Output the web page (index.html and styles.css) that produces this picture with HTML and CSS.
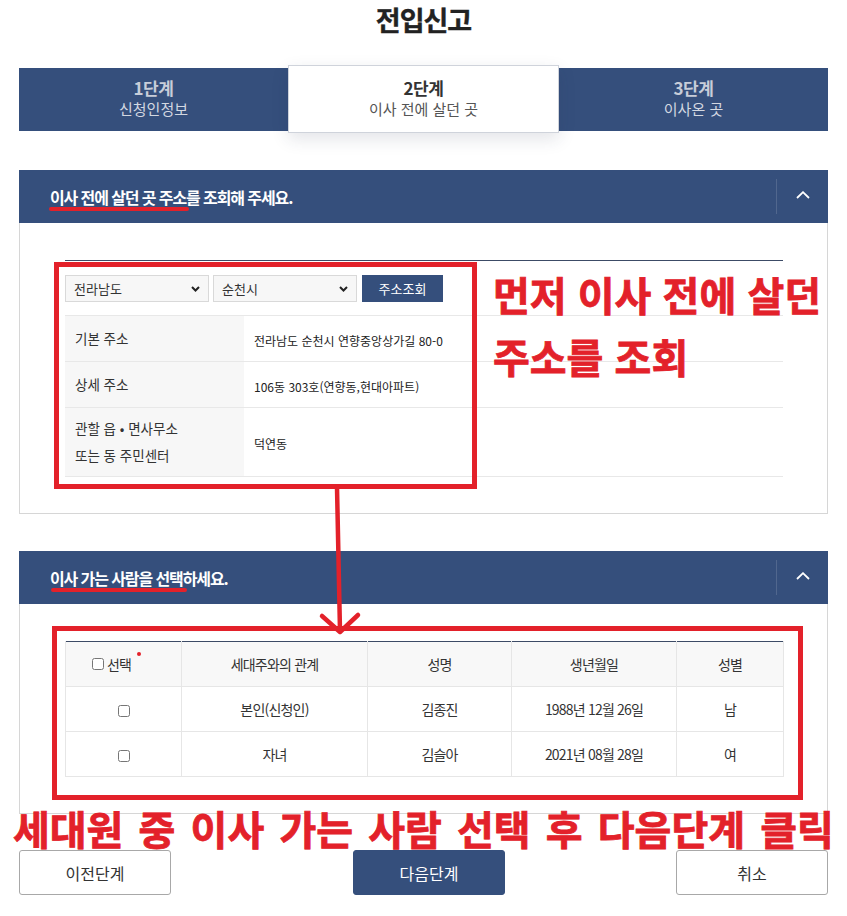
FILE: index.html
```html
<!DOCTYPE html>
<html lang="ko">
<head>
<meta charset="utf-8">
<title>전입신고</title>
<link rel="stylesheet" href="styles.css">
</head>
<body>
<div class="page">
  <h1 class="title">전입신고</h1>

  <div class="steps">
    <div class="step"><strong>1단계</strong><span>신청인정보</span></div>
    <div class="step active"><strong>2단계</strong><span>이사 전에 살던 곳</span></div>
    <div class="step"><strong>3단계</strong><span>이사온 곳</span></div>
  </div>

  <section class="section first">
    <div class="sec-head">
      <h2 class="sec-title">이사 전에 살던 곳 주소를 조회해 주세요.</h2>
      <div class="toggle"><svg width="14" height="8" viewBox="0 0 14 8"><polyline points="1,7 7,1.2 13,7" fill="none" stroke="#fff" stroke-width="1.8"/></svg></div>
    </div>
    <div class="sec-body">
      <div class="addr">
        <div class="search-row">
          <div class="select w1"><span>전라남도</span><svg width="9" height="6" viewBox="0 0 9 6"><polyline points="1,1 4.5,4.5 8,1" fill="none" stroke="#222" stroke-width="2"/></svg></div>
          <div class="select w2"><span>순천시</span><svg width="9" height="6" viewBox="0 0 9 6"><polyline points="1,1 4.5,4.5 8,1" fill="none" stroke="#222" stroke-width="2"/></svg></div>
          <button class="btn-search" type="button">주소조회</button>
        </div>
        <div class="row"><div class="th">기본 주소</div><div class="td">전라남도 순천시 연향중앙상가길 80-0</div></div>
        <div class="row"><div class="th">상세 주소</div><div class="td">106동 303호(연향동,현대아파트)</div></div>
        <div class="row"><div class="th">관할 읍 • 면사무소<br>또는 동 주민센터</div><div class="td">덕연동</div></div>
      </div>
    </div>
  </section>

  <section class="section second">
    <div class="sec-head">
      <h2 class="sec-title">이사 가는 사람을 선택하세요.</h2>
      <div class="toggle"><svg width="14" height="8" viewBox="0 0 14 8"><polyline points="1,7 7,1.2 13,7" fill="none" stroke="#fff" stroke-width="1.8"/></svg></div>
    </div>
    <div class="sec-body">
      <table class="members">
        <colgroup>
          <col class="c1"><col class="c2"><col class="c3"><col class="c4"><col class="c5">
        </colgroup>
        <thead>
          <tr>
            <th class="sel"><label class="chk-all"><input type="checkbox"> 선택<i class="req"></i></label></th>
            <th>세대주와의 관계</th>
            <th>성명</th>
            <th>생년월일</th>
            <th>성별</th>
          </tr>
        </thead>
        <tbody>
          <tr><td><input type="checkbox"></td><td>본인(신청인)</td><td>김종진</td><td>1988년 12월 26일</td><td>남</td></tr>
          <tr><td><input type="checkbox"></td><td>자녀</td><td>김슬아</td><td>2021년 08월 28일</td><td>여</td></tr>
        </tbody>
      </table>
    </div>
  </section>

  <div class="actions">
    <button class="btn" type="button">이전단계</button>
    <button class="btn primary" type="button">다음단계</button>
    <button class="btn" type="button">취소</button>
  </div>

  <div class="marks" aria-hidden="true">
    <div class="uline u1"></div>
    <div class="uline u2"></div>
    <div class="rbox b1"></div>
    <div class="rbox b2"></div>
    <svg class="arrow" width="60" height="160" viewBox="310 480 60 160">
      <polyline points="337,487 340,631" fill="none" stroke="#e3212a" stroke-width="4.5" stroke-linecap="round"/>
      <polyline points="322,616 340,632 358,615" fill="none" stroke="#e3212a" stroke-width="4.5" stroke-linecap="round" stroke-linejoin="round"/>
    </svg>
    <p class="note n1">먼저 이사 전에 살던<br>주소를 조회</p>
    <p class="note n2">세대원 중 이사 가는 사람 선택 후 다음단계 클릭</p>
  </div>
</div>
</body>
</html>
```

FILE: styles.css
```css
* { box-sizing: border-box; }

body {
  margin: 0;
  background: #fff;
  font-family: "Noto Sans CJK KR", "Noto Sans", sans-serif;
  color: #333;
}

.page {
  position: relative;
  width: 847px;
  height: 916px;
  padding: 0 19px;
  overflow: hidden;
}

.title {
  margin: 0;
  padding-top: 2px;
  height: 38px;
  line-height: 36px;
  text-align: center;
  font-size: 27px;
  font-weight: 700;
  letter-spacing: -1px;
  color: #222;
  -webkit-text-stroke: 0.4px #222;
}

/* steps */
.steps {
  margin-top: 30px;
  height: 63px;
  display: flex;
  background: #354f7c;
}
.step {
  flex: 1;
  display: flex;
  flex-direction: column;
  align-items: center;
  justify-content: center;
  padding-bottom: 3px;
  color: #c7cdd9;
}
.step strong {
  font-size: 17px;
  font-weight: 700;
  line-height: 21px;
  letter-spacing: -0.5px;
}
.step span {
  font-size: 15px;
  line-height: 21px;
  color: #d3d8e1;
}
.step.active {
  margin: -3px 0 -2px;
  background: #fff;
  border: 1px solid #cfd3db;
  box-shadow: 0 6px 16px rgba(40, 50, 80, 0.13);
  position: relative;
  z-index: 1;
}
.step.active strong { color: #333; }
.step.active span { color: #555; }

/* sections */
.section.first { margin-top: 39px; }
.section.second { margin-top: 37px; }

.sec-head {
  height: 53px;
  display: flex;
  align-items: center;
  background: #354f7c;
}
.sec-title {
  flex: 1;
  margin: 0;
  padding-left: 31px;
  font-size: 16px;
  font-weight: 700;
  color: #fff;
  letter-spacing: -1.1px;
}
.toggle {
  width: 52px;
  height: 35px;
  border-left: 1px solid rgba(255, 255, 255, 0.14);
  display: flex;
  align-items: center;
  justify-content: center;
  padding-bottom: 3px;
}

.sec-body {
  border: 1px solid #d6d6d6;
  border-top: 0;
  padding: 37px 44px 36px 45px;
}

/* address table */
.addr {
  border-top: 1px solid #3c4b66;
}
.search-row {
  display: flex;
  align-items: center;
  padding: 14px 0 13px;
  border-bottom: 1px solid #e8e8e8;
}
.select {
  height: 27px;
  display: flex;
  align-items: center;
  justify-content: space-between;
  padding: 0 8px;
  background: #f7f7f7;
  border: 1px solid #d9d9d9;
  font-size: 13px;
  color: #333;
}
.select.w1 { width: 144px; }
.select.w2 { width: 144px; margin-left: 4px; }
.btn-search {
  margin-left: 5px;
  width: 81px;
  height: 27px;
  border: 0;
  background: #354f7c;
  color: #fff;
  font-family: inherit;
  font-size: 13px;
  padding: 0;
}

.row {
  display: grid;
  grid-template-columns: 179px 1fr;
  border-bottom: 1px solid #e8e8e8;
  min-height: 46px;
}
.th {
  background: #f7f7f7;
  padding: 7px 10px;
  font-size: 13.5px;
  line-height: 27px;
  color: #333;
  display: flex;
  align-items: center;
}
.td {
  padding: 10px 10px 7px;
  font-size: 12px;
  line-height: 27px;
  color: #222;
  display: flex;
  align-items: center;
}

/* members table */
.members {
  width: 100%;
  border-collapse: collapse;
  border-top: 1px solid #3c4b66;
  table-layout: fixed;
}
.members col.c1 { width: 116px; }
.members col.c2 { width: 186px; }
.members col.c3 { width: 144px; }
.members col.c4 { width: 165px; }
.members col.c5 { width: 107px; }
.members th,
.members td {
  height: 45px;
  border: 1px solid #e6e6e6;
  border-top: 0;
  text-align: center;
  padding: 0;
  font-size: 14px;
  color: #333;
  letter-spacing: -0.8px;
}
.members th {
  background: #f8f8f8;
  font-weight: 400;
}
.members th.sel {
  padding-right: 14px;
}
.members input[type="checkbox"] {
  width: 12px;
  height: 12px;
  margin: 0;
  vertical-align: middle;
}
.chk-all {
  display: inline-flex;
  align-items: center;
  gap: 3px;
}
.req {
  display: inline-block;
  width: 4px;
  height: 4px;
  border-radius: 50%;
  background: #e3212a;
  align-self: flex-start;
  margin-top: -2px;
  margin-left: 3px;
}

/* actions */
.actions {
  margin-top: 36px;
  display: flex;
  justify-content: space-between;
}
.btn {
  width: 152px;
  height: 45px;
  background: #fff;
  border: 1px solid #a8a8a8;
  border-radius: 3px;
  font-family: inherit;
  font-size: 16px;
  color: #333;
  padding: 0;
}
.btn.primary {
  margin-left: 11px;
  background: #354f7c;
  border-color: #354f7c;
  color: #fff;
}

/* annotation overlay */
.marks {
  position: absolute;
  inset: 0;
  pointer-events: none;
}
.uline {
  position: absolute;
  height: 4px;
  border-radius: 2px;
  background: #e3212a;
}
.u1 { left: 49px; top: 207px; width: 140px; }
.u2 { left: 51px; top: 588px; width: 136px; }
.rbox {
  position: absolute;
  border: 5px solid #e3212a;
}
.b1 { left: 54px; top: 262px; width: 423px; height: 227px; }
.b2 { left: 52px; top: 626px; width: 751px; height: 174px; }
.arrow {
  position: absolute;
  left: 310px;
  top: 480px;
}
.note {
  position: absolute;
  margin: 0;
  color: #e3212a;
  font-weight: 700;
  white-space: nowrap;
  -webkit-text-stroke: 0.8px #e3212a;
}
.n1 {
  left: 493px;
  top: 263px;
  font-size: 40px;
  line-height: 62px;
}
.n2 {
  left: 13px;
  top: 806px;
  font-size: 40px;
  line-height: 44px;
  word-spacing: 4px;
}
```
